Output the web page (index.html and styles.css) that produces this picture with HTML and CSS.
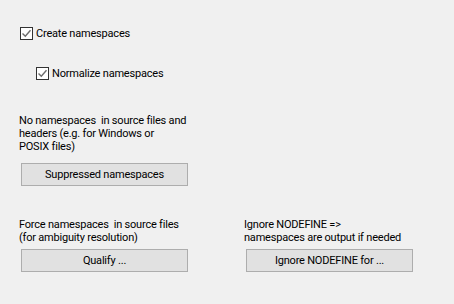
FILE: index.html
```html
<!DOCTYPE html>
<html lang="en">
<head>
  <meta charset="UTF-8" />
  <title>Namespaces</title>
  <link rel="stylesheet" href="styles.css">
</head>
<body>
  <div class="panel">
    <label class="check first">
      <span class="box"><svg width="11" height="11" viewBox="0 0 11 11"><path d="M1.5 5.5 L4.3 8.3 L9.5 2.2" fill="none" stroke="#6d6d6d" stroke-width="1.4"/></svg></span>
      Create namespaces
    </label>
    <label class="check second">
      <span class="box"><svg width="11" height="11" viewBox="0 0 11 11"><path d="M1.5 5.5 L4.3 8.3 L9.5 2.2" fill="none" stroke="#6d6d6d" stroke-width="1.4"/></svg></span>
      Normalize namespaces
    </label>

    <p class="note">No namespaces &nbsp;in source files and<br>headers (e.g. for Windows or<br>POSIX files)</p>
    <button class="btn">Suppressed namespaces</button>

    <div class="columns">
      <div class="col">
        <p class="note">Force namespaces &nbsp;in source files<br>(for ambiguity resolution)</p>
        <button class="btn">Qualify ...</button>
      </div>
      <div class="col right">
        <p class="note">Ignore NODEFINE =&gt;<br>namespaces are output if needed</p>
        <button class="btn">Ignore NODEFINE for ...</button>
      </div>
    </div>
  </div>
</body>
</html>
```

FILE: styles.css
```css
body {
  margin: 0;
  background: #f0f0f0;
  font-family: Roboto, 'Liberation Sans', sans-serif;
  font-size: 11px;
  letter-spacing: -0.2px;
  color: #000;
  width: 454px;
  height: 304px;
  overflow: hidden;
}

.panel {
  padding: 27px 0 0 20px;
}

.check {
  display: flex;
  align-items: center;
  height: 13px;
  gap: 3px;
  line-height: 13px;
}

.check.second {
  margin: 27px 0 0 16px;
}

.box {
  width: 11px;
  height: 11px;
  border: 1px solid #333;
  background: #fff;
  display: flex;
  align-items: center;
  justify-content: center;
}

.note {
  margin: 0;
  line-height: 13px;
  margin-left: -1px;
}

.panel > .note {
  margin-top: 34px;
}

.btn {
  display: block;
  width: 167px;
  height: 23px;
  margin: 10px 0 0 1px;
  background: #e1e1e1;
  border: 1px solid #adadad;
  font-family: inherit;
  font-size: inherit;
  letter-spacing: inherit;
  color: #000;
  padding: 0;
}

.columns {
  display: grid;
  grid-template-columns: 225px 225px;
  margin-top: 32px;
}

.columns .btn {
  margin-top: 5px;
}
```
